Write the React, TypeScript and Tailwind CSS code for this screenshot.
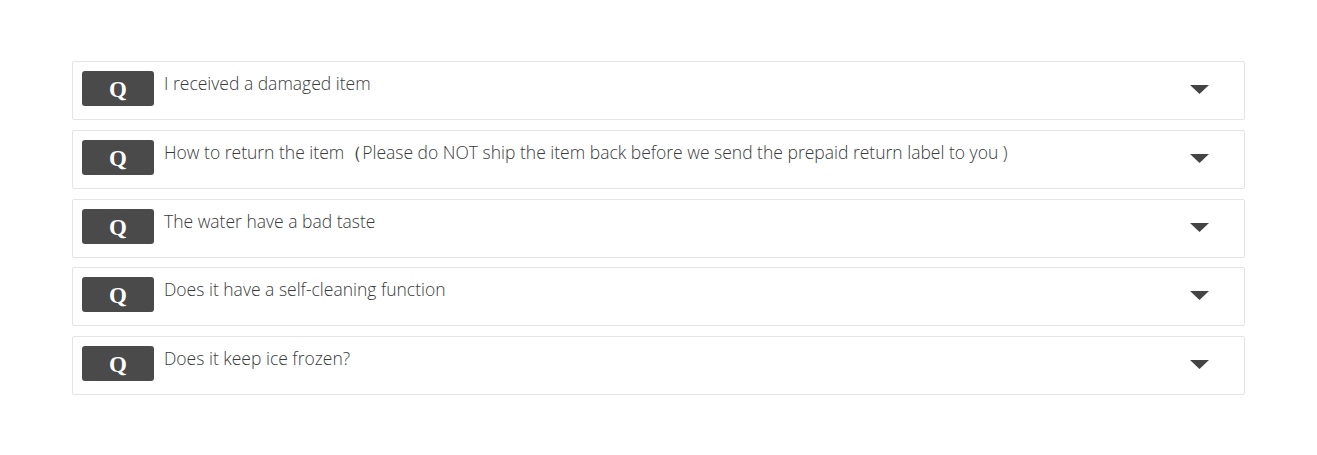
import React from 'react';

const questions = [
  'I received a damaged item',
  'How to return the item（Please do NOT ship the item back before we send the prepaid return label to you )',
  'The water have a bad taste',
  'Does it have a self-cleaning function',
  'Does it keep ice frozen?',
];

function QuestionRow({ text }: { text: string }) {
  return (
    <div className="flex items-start border border-[#e4e4e4] rounded-[2px] bg-white h-[59px] pl-[9px] pt-[9px] pr-[35px]">
      <div className="flex items-center justify-center w-[72px] h-[35px] rounded-[3px] bg-[#4a4a4a] text-white text-[23px] leading-none font-bold font-['Liberation_Serif',serif] pt-[2px] shrink-0">
        Q
      </div>
      <p className="ml-[10px] flex-1 text-[17.5px] leading-[24px] font-light text-[#3a3a3a] font-['Open_Sans',sans-serif]">
        {text}
      </p>
      <svg width="19" height="9" viewBox="0 0 19 9" className="mt-[14px] shrink-0">
        <path d="M0 0 H19 L9.5 9 Z" fill="#444" />
      </svg>
    </div>
  );
}

export default function App() {
  return (
    <div className="min-h-screen bg-white px-[72px] pt-[61px]">
      <div className="flex flex-col gap-[9.75px]">
        {questions.map((q) => (
          <QuestionRow key={q} text={q} />
        ))}
      </div>
    </div>
  );
}
